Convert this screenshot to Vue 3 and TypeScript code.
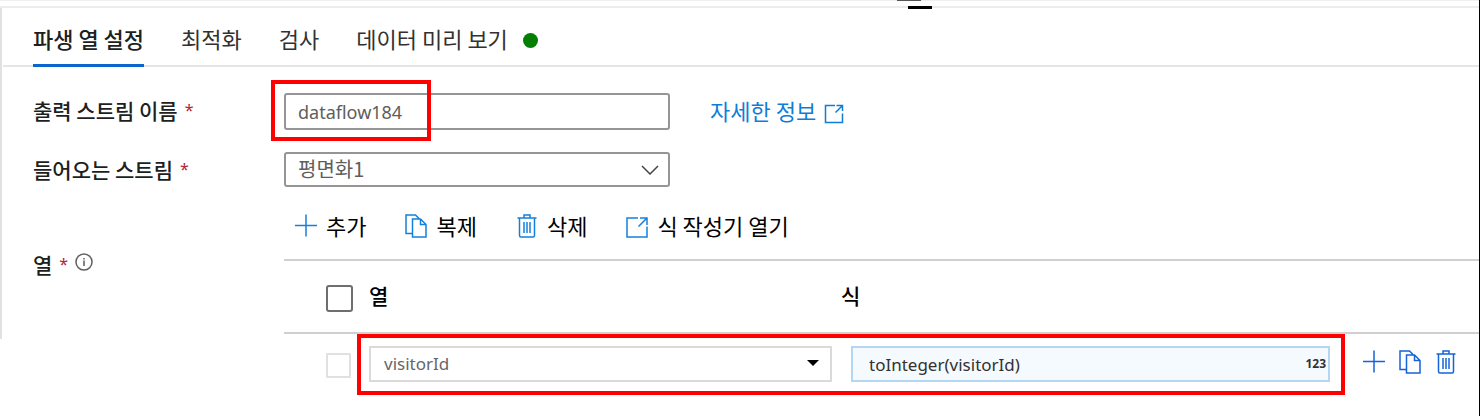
<script setup lang="ts">
import { ref } from 'vue'

interface Tab {
  id: string
  label: string
  status?: boolean
}

type IconName = 'plus' | 'copy' | 'trash' | 'open'

const tabs: Tab[] = [
  { id: 'settings', label: '파생 열 설정' },
  { id: 'optimize', label: '최적화' },
  { id: 'inspect', label: '검사' },
  { id: 'preview', label: '데이터 미리 보기', status: true },
]
const activeTab = ref('settings')

const icons: Record<IconName, string> = {
  plus: 'M11 0.5V22.5M0 11.5H22',
  copy: 'M7 19.5H1V1H10.5L14 4.5M7.5 5H15.5L21 10.5V23H7.5ZM15.5 5V10.5H21',
  trash: 'M1.5 4H20.5M8 4V1H14V4M3.5 4V21.5Q3.5 23 5 23H17Q18.5 23 18.5 21.5V4M8 8V19M11 8V19M14 8V19',
  open: 'M12 4H1V23H21V12.5M14 4H21V11M21 4L12.5 12.5',
}

const tools: { icon: IconName; label: string }[] = [
  { icon: 'plus', label: '추가' },
  { icon: 'copy', label: '복제' },
  { icon: 'trash', label: '삭제' },
  { icon: 'open', label: '식 작성기 열기' },
]
const rowTools = tools.slice(0, 3)

const streamName = ref('dataflow184')
const incoming = ref('평면화1')
const column = ref('visitorId')
const expression = ref('toInteger(visitorId)')
const allChecked = ref(false)
const rowChecked = ref(false)
</script>

<template>
  <main class="panel">
    <div class="splitter"><i class="grip grip-top"></i><i class="grip grip-main"></i></div>

    <nav class="tabs" role="tablist">
      <button
        v-for="tab in tabs"
        :key="tab.id"
        type="button"
        role="tab"
        class="tab"
        :class="{ active: tab.id === activeTab }"
        :aria-selected="tab.id === activeTab"
        @click="activeTab = tab.id"
      >
        {{ tab.label }}<span v-if="tab.status" class="dot"></span>
      </button>
    </nav>

    <div class="form">
      <label class="label" for="stream-name">출력 스트림 이름<span class="req">*</span></label>
      <div class="line">
        <div class="field name-field">
          <input id="stream-name" v-model="streamName" class="box" type="text" />
          <span class="mark mark-name"></span>
        </div>
        <a class="more" href="#">자세한 정보
          <svg class="more-icon" viewBox="0 0 20 20"><path d="M11 1.5H1.5V18.5H18.5V9.5M12.5 1.5H18.5V7M18.5 1.5L11.5 8.5" /></svg>
        </a>
      </div>

      <label class="label" for="incoming">들어오는 스트림<span class="req">*</span></label>
      <div class="field">
        <select id="incoming" v-model="incoming" class="box korean">
          <option>평면화1</option>
        </select>
        <svg class="chevron" viewBox="0 0 18 10"><path d="M1 1L9 9L17 1" /></svg>
      </div>

      <div class="label columns-label">열<span class="req">*</span>
        <svg class="info" viewBox="0 0 18 18"><circle cx="9" cy="9" r="8" /><path d="M9 7.5V13M9 5V6.5" /></svg>
      </div>
      <div class="columns">
        <div class="toolbar">
          <button v-for="tool in tools" :key="tool.icon" type="button" class="tool">
            <svg class="icon" viewBox="0 0 22 24"><path :d="icons[tool.icon]" /></svg>
            {{ tool.label }}
          </button>
        </div>
        <table class="grid">
          <thead>
            <tr>
              <th class="check-cell"><input v-model="allChecked" type="checkbox" class="check" aria-label="모두 선택" /></th>
              <th scope="col">열</th>
              <th scope="col" class="expression-head">식</th>
            </tr>
          </thead>
          <tbody>
            <tr>
              <td class="check-cell"><input v-model="rowChecked" type="checkbox" class="check light" aria-label="행 선택" /></td>
              <td class="cell">
                <select v-model="column" class="entry" aria-label="열">
                  <option>visitorId</option>
                </select>
                <svg class="caret" viewBox="0 0 12 6"><path d="M0 0H12L6 6Z" /></svg>
              </td>
              <td class="cell">
                <input v-model="expression" class="entry expression" type="text" aria-label="식" />
                <span class="type">123</span>
              </td>
              <td class="actions">
                <button v-for="tool in rowTools" :key="tool.icon" type="button" class="tool" :aria-label="tool.label">
                  <svg class="icon" viewBox="0 0 22 24"><path :d="icons[tool.icon]" /></svg>
                </button>
                <span class="mark mark-row"></span>
              </td>
            </tr>
          </tbody>
        </table>
      </div>
    </div>
  </main>
</template>

<style>
body {
  background: #fff;
}
</style>

<style scoped>
.panel,
.panel * {
  box-sizing: border-box;
}
.panel {
  position: relative;
  min-height: 100vh;
  border-right: 1px solid #000;
  color: #201f1e;
  font: 22px/32px "Noto Sans", "Noto Sans CJK KR", sans-serif;
}
.panel::before {
  content: "";
  position: absolute;
  top: 6px;
  left: 0;
  width: 2px;
  height: 333px;
  background: #e1e1e1;
}
button,
input,
select {
  margin: 0;
  color: inherit;
  font: inherit;
}
button {
  padding: 0;
  border: 0;
  background: none;
}
svg {
  display: block;
  flex: none;
  fill: none;
  stroke: currentColor;
}
.splitter {
  position: relative;
  height: 8px;
  border-top: 1px solid #f0f0f0;
  border-bottom: 2px solid #ececec;
}
.grip {
  position: absolute;
  width: 24px;
}
.grip-top {
  top: -1px;
  left: 897px;
  height: 1px;
  background: #555;
}
.grip-main {
  top: 5px;
  left: 908px;
  height: 3px;
  background: #000;
}
.tabs {
  display: flex;
  gap: 37px;
  height: 59px;
  margin-left: 3px;
  padding-left: 30px;
  border-bottom: 2px solid #e5e5e5;
}
.tab {
  display: flex;
  align-items: center;
  height: 59px;
  padding-top: 3px;
  border-bottom: 3px solid transparent;
  font-family: "Noto Sans CJK KR", sans-serif;
  color: #323130;
}
.tab.active {
  border-bottom-color: #0b65cc;
  font-weight: 500;
  color: #201f1e;
}
.dot {
  width: 15px;
  height: 15px;
  margin: 6px 0 0 15px;
  border-radius: 50%;
  background: #047f04;
}
.form {
  display: grid;
  grid-template-columns: 251px minmax(0, 1fr);
  padding: 26px 0 0 33px;
}
.label {
  display: flex;
  align-items: center;
  height: 37px;
  padding-bottom: 4px;
  font: 500 21px/32px "Noto Sans CJK KR", sans-serif;
}
.req {
  margin-left: 7px;
  color: #b4233c;
  font: 16px/32px "Noto Sans", sans-serif;
}
.line {
  display: flex;
  align-items: center;
  gap: 40px;
  margin-bottom: 22px;
}
.field {
  position: relative;
  width: 386px;
}
.box {
  display: block;
  width: 100%;
  height: 35px;
  padding: 0 12px;
  border: 2px solid #979593;
  border-radius: 3px;
  outline: 0;
  background: #fff;
  appearance: none;
  color: #605e5c;
  font-size: 18px;
}
.name-field .box {
  height: 37px;
}
.box.korean {
  padding-bottom: 2px;
  font: 20px/28px "Noto Sans CJK KR", sans-serif;
}
.chevron {
  position: absolute;
  top: 13px;
  right: 11px;
  width: 18px;
  height: 10px;
  color: #444;
  stroke-width: 1.5;
  pointer-events: none;
}
.mark {
  position: absolute;
  border: 4px solid #f00;
  pointer-events: none;
}
.mark-name {
  top: -13px;
  left: -13px;
  width: 160px;
  height: 61px;
}
.more {
  display: flex;
  align-items: center;
  gap: 8px;
  padding-bottom: 4px;
  color: #0f7dd7;
  font-family: "Noto Sans CJK KR", sans-serif;
  text-decoration: none;
}
.more-icon {
  width: 20px;
  height: 20px;
  margin-top: 8px;
  stroke-width: 1.5;
}
.columns-label {
  margin-top: 58px;
}
.info {
  width: 18px;
  height: 18px;
  margin: -4px 0 0 7px;
  color: #605e5c;
  stroke-width: 1.5;
}
.columns {
  padding-top: 20px;
}
.toolbar {
  display: flex;
  gap: 39px;
  padding: 0 0 18px 11px;
}
.tool {
  display: flex;
  align-items: center;
  gap: 9px;
  color: #000;
  font-family: "Noto Sans CJK KR", sans-serif;
}
.toolbar .icon {
  margin-top: 2px;
}
.icon {
  width: 22px;
  height: 24px;
  color: #1580dc;
  stroke-width: 1.5;
}
.grid {
  display: block;
}
.grid thead,
.grid tbody {
  display: block;
}
.grid tr {
  position: relative;
  display: grid;
  grid-template-columns: 66px minmax(0, 463fr) minmax(0, 479fr) 130px;
  align-items: center;
  gap: 19px;
}
.grid th,
.grid td {
  padding: 0;
}
.grid thead tr {
  height: 75px;
  border-top: 2px solid #d0d0d0;
  border-bottom: 2px solid #d0d0d0;
}
.grid tbody tr {
  padding-top: 12px;
}
.grid th {
  padding-bottom: 4px;
  color: #000;
  font: 500 21px/32px "Noto Sans CJK KR", sans-serif;
  text-align: left;
}
.grid .expression-head {
  margin-left: -10px;
}
.grid .check-cell {
  display: flex;
  padding: 3px 0 0 42px;
}
.check {
  flex: none;
  width: 27px;
  height: 27px;
  border: 2px solid #706e6c;
  border-radius: 3px;
  background: #fff;
  appearance: none;
}
.check.light {
  width: 25px;
  height: 25px;
  border-color: #e1e1e1;
  border-radius: 1px;
}
.cell {
  position: relative;
}
.entry {
  display: block;
  width: 100%;
  height: 36px;
  padding: 0 13px;
  border: 2px solid #dadada;
  border-radius: 0;
  outline: 0;
  background: #fff;
  appearance: none;
  color: #666;
  font-size: 17px;
}
.expression {
  padding: 0 44px 0 16px;
  border-color: #b5d6f0;
  background: #f5faff;
  color: #323130;
}
.caret {
  position: absolute;
  top: 14px;
  right: 13px;
  width: 12px;
  height: 6px;
  fill: #000;
  stroke: none;
  pointer-events: none;
}
.type {
  position: absolute;
  top: 10px;
  right: 4px;
  color: #323130;
  font-size: 12px;
  font-weight: 700;
  line-height: 16px;
}
.actions {
  display: flex;
  gap: 14px;
}
.grid .actions {
  padding: 0 0 4px 14px;
}
.actions .icon {
  color: #1464d8;
}
.mark-row {
  top: 0;
  right: 134px;
  left: 73px;
  height: 61px;
}
</style>
